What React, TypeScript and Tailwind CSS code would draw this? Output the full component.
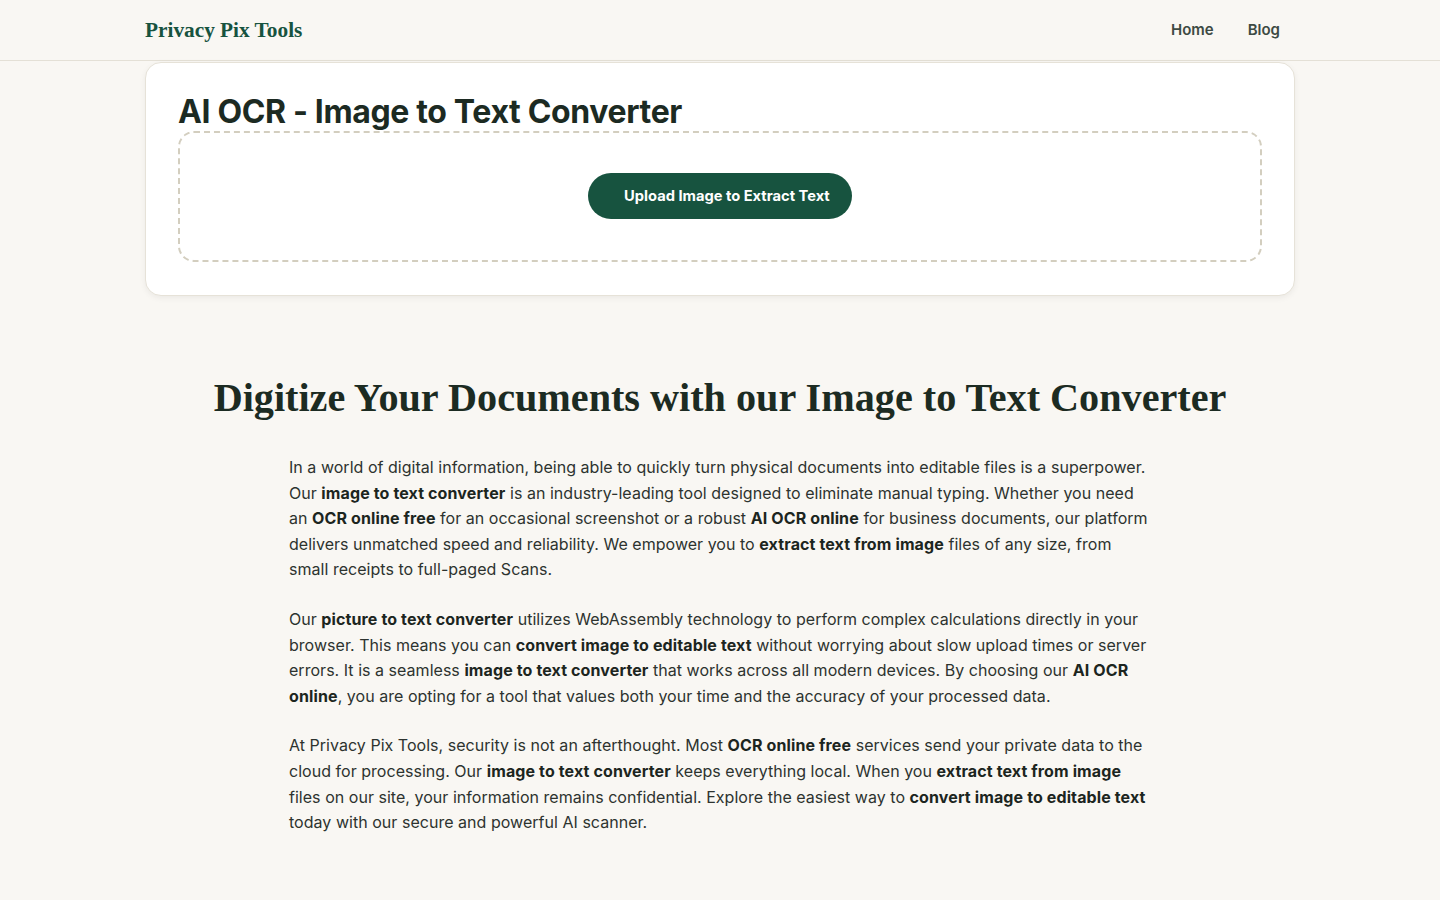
import React from 'react';

const serif = "font-['Liberation_Serif','Times_New_Roman',serif]";

const Header = () => (
    <header className="h-[61px] border-b border-[#e4e0d6] bg-[#f9f7f3]">
        <div className="mx-auto flex h-full max-w-[1150px] items-center justify-between pr-[15px]">
            <a className={`${serif} pt-[2px] text-[21.3px] font-bold text-[#17533f]`}>Privacy Pix Tools</a>
            <nav className="flex items-center gap-[34px] text-[15px] font-semibold text-[#3d4a43]">
                <a>Home</a>
                <a>Blog</a>
            </nav>
        </div>
    </header>
);

const UploadCard = () => (
    <div className="mx-auto mt-[1px] max-w-[1150px] rounded-2xl border border-[#e6e2d8] bg-white px-8 pb-[33px] pt-[29px] shadow-[0_2px_6px_rgba(0,0,0,0.06)]">
        <h1 className="text-[32px] font-bold leading-[39px] tracking-[-0.35px] text-[#1c2a22]">AI OCR - Image to Text Converter</h1>
        <div className="flex justify-center rounded-2xl border-2 border-dashed border-[#d3cebf] pb-[41px] pt-10">
            <button className="h-[46px] w-[264px] rounded-full bg-[#17533f] pl-9 text-left text-[14.7px] font-bold text-white">
                Upload Image to Extract Text
            </button>
        </div>
    </div>
);

const B = ({ children }: { children: React.ReactNode }) => (
    <strong className="font-bold tracking-[0.12px] text-[#1c2520]">{children}</strong>
);

const Article = () => (
    <section className="mx-auto max-w-[1150px] pt-[75px]">
        <h2 className={`${serif} text-center text-[40.2px] font-bold leading-[53px] text-[#1c2b22]`}>
            Digitize Your Documents with our Image to Text Converter
        </h2>
        <div className="mx-auto mt-[31px] max-w-[862px] text-[16px] leading-[25.6px] tracking-[0.03px] text-[#2d332f]">
            <p className="mb-6">
                In a world of digital information, being able to quickly turn physical documents into editable files is a superpower. Our <B>image to text converter</B> is an industry-leading tool designed to eliminate manual typing. Whether you need an <B>OCR online free</B> for an occasional screenshot or a robust <B>AI OCR online</B> for business documents, our platform delivers unmatched speed and reliability. We empower you to <B>extract text from image</B> files of any size, from small receipts to full-paged Scans.
            </p>
            <p className="mb-6">
                Our <B>picture to text converter</B> utilizes WebAssembly technology to perform complex calculations directly in your browser. This means you can <B>convert image to editable text</B> without worrying about slow upload times or server errors. It is a seamless <B>image to text converter</B> that works across all modern devices. By choosing our <B>AI OCR online</B>, you are opting for a tool that values both your time and the accuracy of your processed data.
            </p>
            <p className="mb-6">
                At Privacy Pix Tools, security is not an afterthought. Most <B>OCR online free</B> services send your private data to the cloud for processing. Our <B>image to text converter</B> keeps everything local. When you <B>extract text from image</B> files on our site, your information remains confidential. Explore the easiest way to <B>convert image to editable text</B> today with our secure and powerful AI scanner.
            </p>
        </div>
    </section>
);

export default function App() {
    return (
        <div className="min-h-screen bg-[#f9f7f3] font-['Inter',sans-serif]">
            <Header />
            <main className="px-4">
                <UploadCard />
                <Article />
            </main>
        </div>
    );
}
